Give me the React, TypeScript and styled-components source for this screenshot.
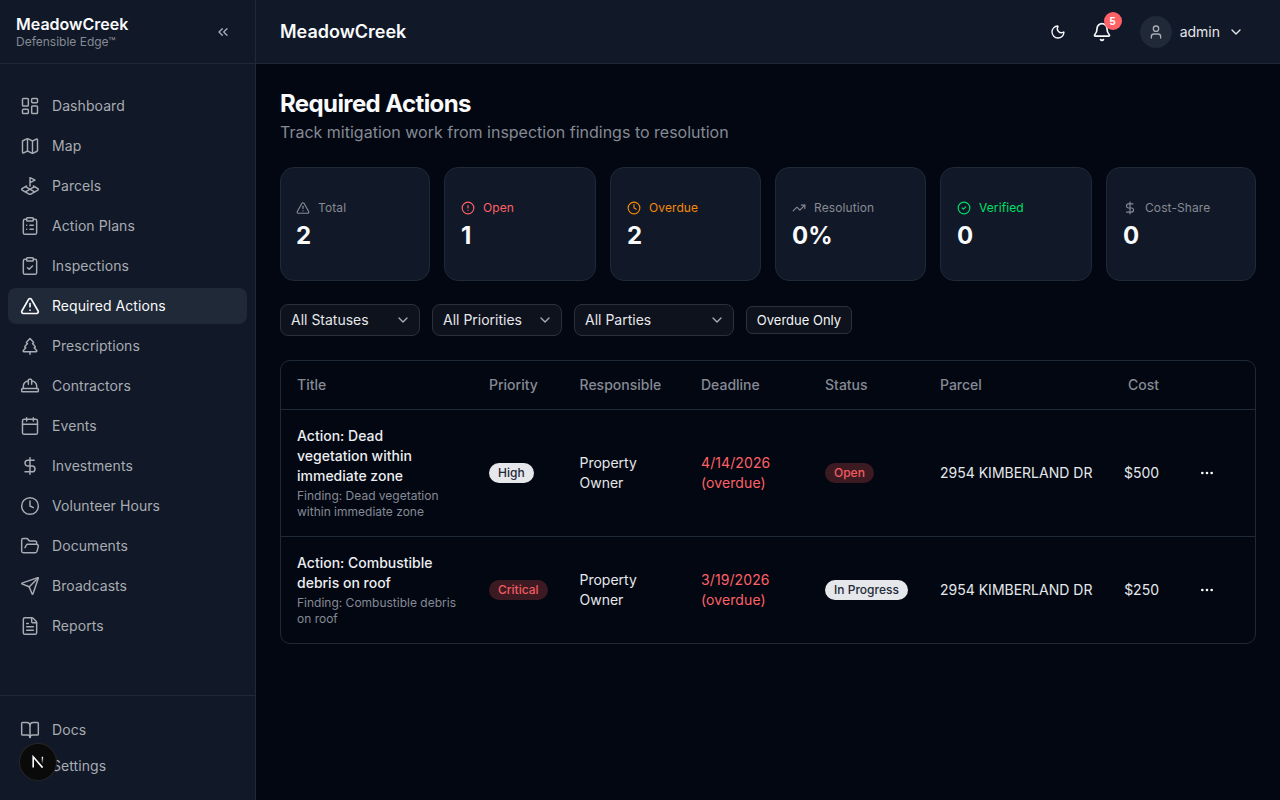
import React from "react";
import styled, { createGlobalStyle } from "styled-components";
import {
  BookOpen,
  Bell,
  Calendar,
  ChevronDown,
  ChevronsLeft,
  CircleAlert,
  CircleCheck,
  ClipboardCheck,
  ClipboardList,
  Clock,
  DollarSign,
  Ellipsis,
  FileText,
  FolderOpen,
  HardHat,
  LandPlot,
  LayoutDashboard,
  Map as MapIcon,
  Moon,
  Send,
  Settings,
  TreePine,
  TrendingUp,
  TriangleAlert,
  User,
} from "lucide-react";

const GlobalStyle = createGlobalStyle`
  html, body {
    margin: 0;
    height: 100%;
    background: #030712;
  }
  body {
    font-family: "Inter", "Liberation Sans", sans-serif;
    color: #f9fafb;
    overflow: hidden;
  }
  * {
    box-sizing: border-box;
  }
`;

const Shell = styled.div`
  display: flex;
  width: 1280px;
  height: 800px;
`;

const Sidebar = styled.aside`
  width: 256px;
  flex-shrink: 0;
  display: flex;
  flex-direction: column;
  background: #111827;
  border-right: 1px solid #1f2937;
`;

const Brand = styled.div`
  height: 64px;
  flex-shrink: 0;
  display: flex;
  align-items: center;
  justify-content: space-between;
  padding: 0 16px;
  border-bottom: 1px solid #1f2937;
`;

const BrandName = styled.div`
  font-size: 16px;
  line-height: 20px;
  font-weight: 600;
  color: #f9fafb;
`;

const BrandSub = styled.div`
  font-size: 12px;
  line-height: 16px;
  color: #858a94;
`;

const Collapse = styled.button`
  width: 32px;
  height: 32px;
  display: flex;
  align-items: center;
  justify-content: center;
  padding: 0;
  border: none;
  background: transparent;
  color: #a8acb3;
`;

const Nav = styled.nav`
  flex: 1;
  display: flex;
  flex-direction: column;
  gap: 4px;
  padding: 24px 8px 0;
`;

const NavItem = styled.a<{ $active?: boolean }>`
  height: 36px;
  display: flex;
  align-items: center;
  gap: 12px;
  padding: 0 12px;
  border-radius: 8px;
  font-size: 14px;
  line-height: 20px;
  font-weight: 400;
  letter-spacing: 0.07px;
  color: ${(p) => (p.$active ? "#f9fafb" : "#a8acb3")};
  background: ${(p) => (p.$active ? "#1f2937" : "transparent")};
`;

const NavFoot = styled.div`
  display: flex;
  flex-direction: column;
  padding: 16px 8px;
  border-top: 1px solid #1f2937;
`;

const DevBadge = styled.div`
  position: absolute;
  left: 20px;
  bottom: 20px;
  width: 36px;
  height: 36px;
  display: flex;
  align-items: center;
  justify-content: center;
  border-radius: 50%;
  background: #0a0a0a;
  box-shadow: 0 0 0 1px #262626;
`;

const Content = styled.div`
  flex: 1;
  min-width: 0;
  display: flex;
  flex-direction: column;
`;

const Topbar = styled.header`
  height: 64px;
  flex-shrink: 0;
  display: flex;
  align-items: center;
  padding: 0 24px;
  background: #111827;
  border-bottom: 1px solid #1f2937;
`;

const TopTitle = styled.div`
  flex: 1;
  font-size: 18px;
  font-weight: 600;
  color: #f9fafb;
`;

const IconButton = styled.button`
  position: relative;
  width: 32px;
  height: 32px;
  display: flex;
  align-items: center;
  justify-content: center;
  padding: 0;
  border: none;
  background: transparent;
  color: #f9fafb;
`;

const BellButton = styled(IconButton)`
  margin-left: 12px;
`;

const CountBadge = styled.span`
  position: absolute;
  top: -4px;
  right: -4px;
  width: 18px;
  height: 18px;
  display: flex;
  align-items: center;
  justify-content: center;
  border-radius: 50%;
  background: #ff6166;
  color: #fff;
  font-size: 11px;
  font-weight: 600;
`;

const UserMenu = styled.div`
  display: flex;
  align-items: center;
  gap: 8px;
  margin-left: 22px;
  margin-right: 12px;
  font-size: 14px;
  color: #e5e7eb;
`;

const Avatar = styled.span`
  width: 32px;
  height: 32px;
  display: flex;
  align-items: center;
  justify-content: center;
  border-radius: 50%;
  background: #1f2937;
  color: #a8acb3;
`;

const Main = styled.main`
  flex: 1;
  padding: 24px;
  background: #030712;
`;

const PageTitle = styled.h1`
  margin: 0;
  font-size: 24px;
  line-height: 32px;
  font-weight: 700;
  letter-spacing: -0.025em;
  color: #f9fafb;
`;

const PageSub = styled.p`
  margin: 0 0 23px;
  font-size: 16px;
  line-height: 24px;
  color: #858a94;
`;

const Stats = styled.div`
  display: grid;
  grid-template-columns: 150fr 152fr 151fr 151fr 152fr 150fr;
  gap: 14px;
  margin-bottom: 23px;
`;

const StatCard = styled.div`
  height: 114px;
  display: flex;
  flex-direction: column;
  justify-content: center;
  gap: 4px;
  padding: 4px 15px 0;
  background: #111827;
  border: 1px solid #1f2937;
  border-radius: 14px;
  & + & {
    padding-left: 16px;
  }
`;

const StatLabel = styled.div<{ $color: string }>`
  display: flex;
  align-items: center;
  gap: 8px;
  font-size: 12px;
  line-height: 16px;
  font-weight: 400;
  letter-spacing: 0.1px;
  color: ${(p) => p.$color};
`;

const StatValue = styled.div`
  font-size: 24px;
  line-height: 32px;
  font-weight: 700;
  color: #f9fafb;
`;

const Filters = styled.div`
  display: flex;
  align-items: center;
  gap: 12px;
  margin-bottom: 24px;
`;

const Select = styled.button<{ $width: number }>`
  width: ${(p) => p.$width}px;
  height: 32px;
  display: flex;
  align-items: center;
  justify-content: space-between;
  padding: 0 8px 0 10px;
  background: #0d121c;
  border: 1px solid #2b303b;
  border-radius: 8px;
  font-family: inherit;
  font-size: 14px;
  line-height: 20px;
  color: #e5e7eb;
  svg {
    color: #a8acb3;
  }
`;

const OverdueButton = styled.button`
  height: 28px;
  width: 106px;
  padding: 0;
  background: #0d121c;
  border: 1px solid #2b303b;
  border-radius: 6px;
  font-family: inherit;
  font-size: 13px;
  line-height: 20px;
  font-weight: 400;
  color: #f3f4f6;
`;

const TableWrap = styled.div`
  border: 1px solid #1f2937;
  border-radius: 10px;
  overflow: hidden;
`;

const Table = styled.table`
  width: 974px;
  table-layout: fixed;
  border-collapse: collapse;
`;

const Th = styled.th<{ $right?: boolean }>`
  height: 48px;
  padding: 0 16px;
  text-align: ${(p) => (p.$right ? "right" : "left")};
  font-size: 14px;
  font-weight: 500;
  color: #858a94;
  border-bottom: 1px solid #1f2937;
`;

const Row = styled.tr`
  & + & td {
    border-top: 1px solid #1f2937;
  }
`;

const Td = styled.td<{ $right?: boolean; $nowrap?: boolean }>`
  padding: 16px;
  vertical-align: middle;
  text-align: ${(p) => (p.$right ? "right" : "left")};
  white-space: ${(p) => (p.$nowrap ? "nowrap" : "normal")};
  font-size: 14px;
  line-height: 20px;
  color: #e5e7eb;
`;

const ActionTitle = styled.div`
  font-weight: 500;
  color: #eceef1;
`;

const Finding = styled.div`
  margin-top: 2px;
  font-size: 12px;
  line-height: 16px;
  color: #858a94;
`;

const Pill = styled.span<{ $tone: "light" | "red" }>`
  display: inline-flex;
  align-items: center;
  height: 20px;
  padding: 0 9px;
  border-radius: 10px;
  font-size: 12px;
  font-weight: 500;
  white-space: nowrap;
  color: ${(p) => (p.$tone === "light" ? "#1f2937" : "#f25c60")};
  background: ${(p) => (p.$tone === "light" ? "#e5e7eb" : "#3c1a22")};
`;

const Late = styled.span`
  color: #ff6166;
  letter-spacing: 0.1px;
`;

const Dots = styled.span`
  width: 32px;
  display: flex;
  justify-content: center;
  color: #f9fafb;
`;

const nav = [
  { label: "Dashboard", icon: LayoutDashboard },
  { label: "Map", icon: MapIcon },
  { label: "Parcels", icon: LandPlot },
  { label: "Action Plans", icon: ClipboardList },
  { label: "Inspections", icon: ClipboardCheck },
  { label: "Required Actions", icon: TriangleAlert, active: true },
  { label: "Prescriptions", icon: TreePine },
  { label: "Contractors", icon: HardHat },
  { label: "Events", icon: Calendar },
  { label: "Investments", icon: DollarSign },
  { label: "Volunteer Hours", icon: Clock },
  { label: "Documents", icon: FolderOpen },
  { label: "Broadcasts", icon: Send },
  { label: "Reports", icon: FileText },
];

const stats = [
  { label: "Total", value: "2", icon: TriangleAlert, color: "#858a94" },
  { label: "Open", value: "1", icon: CircleAlert, color: "#ff6166" },
  { label: "Overdue", value: "2", icon: Clock, color: "#f58a07" },
  { label: "Resolution", value: "0%", icon: TrendingUp, color: "#858a94" },
  { label: "Verified", value: "0", icon: CircleCheck, color: "#00e068" },
  { label: "Cost-Share", value: "0", icon: DollarSign, color: "#858a94" },
];

const rows = [
  {
    title: "Action: Dead vegetation within immediate zone",
    finding: "Finding: Dead vegetation within immediate zone",
    priority: "High",
    priorityTone: "light" as const,
    date: "4/14/2026",
    status: "Open",
    statusTone: "red" as const,
    cost: "$500",
  },
  {
    title: "Action: Combustible debris on roof",
    finding: "Finding: Combustible debris on roof",
    priority: "Critical",
    priorityTone: "red" as const,
    date: "3/19/2026",
    status: "In Progress",
    statusTone: "light" as const,
    cost: "$250",
  },
];

const colWidths = [192, 90.5, 121.5, 124, 115, 184, 67, 80];

export default function App() {
  return (
    <Shell>
      <GlobalStyle />
      <Sidebar>
        <Brand>
          <div>
            <BrandName>MeadowCreek</BrandName>
            <BrandSub>Defensible Edge™</BrandSub>
          </div>
          <Collapse>
            <ChevronsLeft size={16} />
          </Collapse>
        </Brand>
        <Nav>
          {nav.map(({ label, icon: Icon, active }) => (
            <NavItem key={label} $active={active}>
              <Icon size={20} strokeWidth={active ? 2 : 1.75} />
              {label}
            </NavItem>
          ))}
        </Nav>
        <NavFoot>
          <NavItem>
            <BookOpen size={20} strokeWidth={1.75} />
            Docs
          </NavItem>
          <NavItem>
            <Settings size={20} strokeWidth={1.75} />
            Settings
          </NavItem>
        </NavFoot>
      </Sidebar>
      <DevBadge>
        <svg width="16" height="16" viewBox="0 0 16 16" fill="none">
          <defs>
            <linearGradient id="nextFade" x1="0" y1="3" x2="0" y2="10" gradientUnits="userSpaceOnUse">
              <stop offset="0" stopColor="#fff" />
              <stop offset="1" stopColor="#fff" stopOpacity="0" />
            </linearGradient>
          </defs>
          <path d="M3.2 13.5V2.8L12.6 13.6" stroke="#fff" strokeWidth="1.6" />
          <path d="M12.4 2.8v8" stroke="url(#nextFade)" strokeWidth="1.4" />
        </svg>
      </DevBadge>
      <Content>
        <Topbar>
          <TopTitle>MeadowCreek</TopTitle>
          <IconButton>
            <Moon size={16} />
          </IconButton>
          <BellButton>
            <Bell size={20} />
            <CountBadge>5</CountBadge>
          </BellButton>
          <UserMenu>
            <Avatar>
              <User size={16} />
            </Avatar>
            admin
            <ChevronDown size={16} />
          </UserMenu>
        </Topbar>
        <Main>
          <PageTitle>Required Actions</PageTitle>
          <PageSub>Track mitigation work from inspection findings to resolution</PageSub>
          <Stats>
            {stats.map(({ label, value, icon: Icon, color }) => (
              <StatCard key={label}>
                <StatLabel $color={color}>
                  <Icon size={14} />
                  {label}
                </StatLabel>
                <StatValue>{value}</StatValue>
              </StatCard>
            ))}
          </Stats>
          <Filters>
            <Select $width={140}>
              All Statuses
              <ChevronDown size={16} />
            </Select>
            <Select $width={130}>
              All Priorities
              <ChevronDown size={16} />
            </Select>
            <Select $width={160}>
              All Parties
              <ChevronDown size={16} />
            </Select>
            <OverdueButton>Overdue Only</OverdueButton>
          </Filters>
          <TableWrap>
            <Table>
              <colgroup>
                {colWidths.map((w, i) => (
                  <col key={i} width={w} />
                ))}
              </colgroup>
              <thead>
                <tr>
                  <Th>Title</Th>
                  <Th>Priority</Th>
                  <Th>Responsible</Th>
                  <Th>Deadline</Th>
                  <Th>Status</Th>
                  <Th>Parcel</Th>
                  <Th $right>Cost</Th>
                  <Th />
                </tr>
              </thead>
              <tbody>
                {rows.map((r) => (
                  <Row key={r.title}>
                    <Td>
                      <ActionTitle>{r.title}</ActionTitle>
                      <Finding>{r.finding}</Finding>
                    </Td>
                    <Td>
                      <Pill $tone={r.priorityTone}>{r.priority}</Pill>
                    </Td>
                    <Td>Property Owner</Td>
                    <Td>
                      <Late>
                        {r.date}
                        <br />
                        (overdue)
                      </Late>
                    </Td>
                    <Td>
                      <Pill $tone={r.statusTone}>{r.status}</Pill>
                    </Td>
                    <Td $nowrap>2954 KIMBERLAND DR</Td>
                    <Td $right>{r.cost}</Td>
                    <Td>
                      <Dots>
                        <Ellipsis size={16} />
                      </Dots>
                    </Td>
                  </Row>
                ))}
              </tbody>
            </Table>
          </TableWrap>
        </Main>
      </Content>
    </Shell>
  );
}
